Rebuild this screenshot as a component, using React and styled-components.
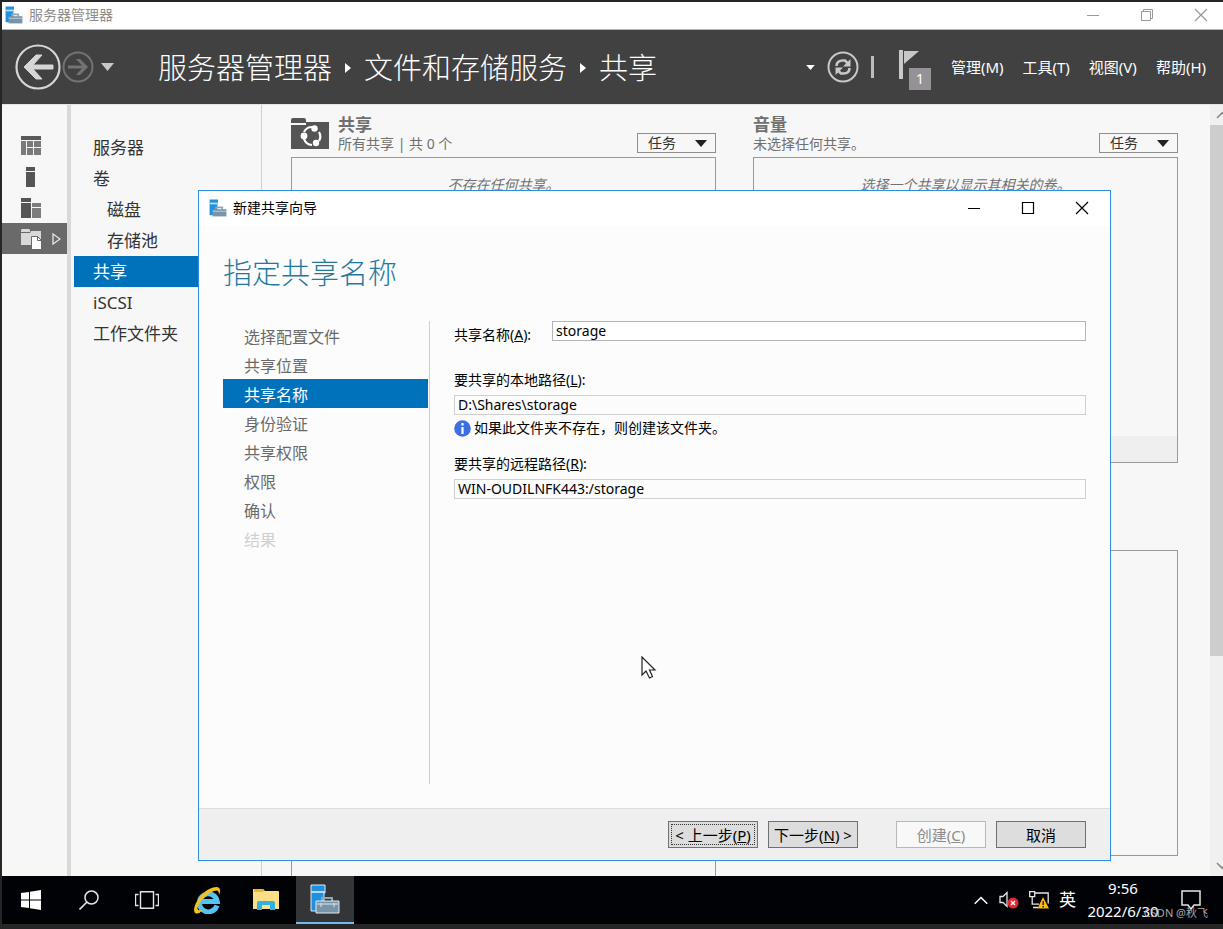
import React, { useState } from "react";
import styled, { createGlobalStyle, css } from "styled-components";

const GlobalStyle = createGlobalStyle`
  * {
    box-sizing: border-box;
  }

  body {
    margin: 0;
    background: #262626;
    font-family: "Noto Sans", "Noto Sans CJK SC", sans-serif;
    font-size: 14px;
    line-height: 20px;
    color: #000;
  }

  button, input {
    font: inherit;
    color: inherit;
  }

  button {
    padding: 0;
    border: 0;
    background: none;
  }

  a {
    color: inherit;
    text-decoration: none;
  }

  ul, ol {
    margin: 0;
    padding: 0;
    list-style: none;
  }

  svg {
    display: block;
    flex: none;
  }
`;

/* ===== DESKTOP ===== */
const Desktop = styled.div`
  position: relative;
  display: flex;
  flex-direction: column;
  min-height: 100vh;
  padding: 2px 0 5px 2px;
  overflow: hidden;
`;

/* ===== MAIN WINDOW ===== */
const TitleBar = styled.header`
  display: flex;
  align-items: center;
  gap: 6px;
  height: 28px;
  padding: 0 15px 2px 3px;
  background: #fff;
  border-bottom: 1px solid #b4b4b4;
  color: #8c8c8c;
`;

const WindowButtons = styled.div`
  display: flex;
  gap: 40px;
  margin-left: auto;
`;

const TopBar = styled.div`
  display: flex;
  align-items: center;
  height: 74px;
  padding: 0 17px 0 13px;
  background: #414141;
  color: #fff;
`;

const HistoryButtons = styled.div`
  display: flex;
  align-items: center;
  gap: 1px;
  width: 143px;
`;

const Breadcrumb = styled.nav`
  display: flex;
  align-items: center;
  gap: 13px;
  padding-top: 2px;
  font-size: 29px;
  font-weight: 300;
  line-height: 40px;
  white-space: nowrap;
`;

const TopActions = styled.div`
  display: flex;
  align-items: center;
  gap: 12px;
  margin-left: auto;
  margin-right: 18px;
`;

const Separator = styled.span`
  width: 3px;
  height: 22px;
  background: #bdbdbd;
`;

const FlagButton = styled.button`
  position: relative;
  display: flex;
  align-items: flex-start;
  width: 35px;
  height: 46px;
  margin-left: 12px;
  padding-top: 6px;
`;

const FlagCount = styled.span`
  position: absolute;
  right: 2px;
  bottom: 0;
  width: 22px;
  height: 22px;
  background: #959297;
  color: #fff;
  line-height: 22px;
`;

const Menu = styled.div`
  display: flex;
  gap: 19px;
  font-size: 15px;
  white-space: nowrap;
`;

const Body = styled.div`
  flex: 1;
  display: flex;
  background: #f7f7f7;
  border-top: 1px solid #e4e4e4;
`;

/* ===== LEFT RAIL AND NAVIGATION ===== */
const Rail = styled.div`
  width: 69px;
  padding-top: 25px;
  border-right: 4px solid #d9d9d9;
`;

const RailButton = styled.button`
  display: flex;
  align-items: center;
  gap: 11px;
  width: 100%;
  height: 31px;
  padding-left: 19px;
  ${props => props.$active && css`
    background: #6a6a6a;
  `}
`;

const SideNav = styled.nav`
  width: 191px;
  padding: 27px 0 0 3px;
  border-right: 1px solid #cfcfcf;
`;

const SideLink = styled.a`
  display: block;
  height: 31px;
  padding-left: ${props => (props.$nested ? 33 : 19)}px;
  font-size: 17px;
  line-height: 31px;
  color: #333;
  ${props => props.$active && css`
    background: #0072bc;
    color: #fff;
  `}
`;

/* ===== TILES ===== */
const Tiles = styled.main`
  flex: 1;
  display: grid;
  grid-template-columns: 1fr 1fr;
  gap: 37px;
  padding: 0 32px 0 29px;
`;

const Column = styled.div`
  display: flex;
  flex-direction: column;
`;

const TileHeader = styled.div`
  display: flex;
  align-items: flex-end;
  gap: 9px;
  height: 52px;
  padding-bottom: 4px;
  color: #707070;
  line-height: 18px;
`;

const TileIcon = styled.span`
  padding-bottom: 4px;
`;

const TileTitle = styled.h2`
  margin: 0;
  font-size: 17px;
  font-weight: 700;
  line-height: 20px;
`;

const TasksButton = styled.button`
  display: flex;
  align-items: center;
  justify-content: space-between;
  width: 79px;
  height: 20px;
  margin-left: auto;
  padding: 0 8px 0 10px;
  border: 1px solid #8f8f8f;
  color: #333;
`;

const Panel = styled.section`
  display: flex;
  flex-direction: column;
  justify-content: space-between;
  min-height: 306px;
  border: 1px solid #999;
  text-align: center;
  ${props => props.$fill && css`
    flex: 1;
    border-bottom: 0;
  `}
  & + & {
    margin-top: 87px;
  }
`;

const EmptyText = styled.p`
  margin: 0;
  padding-top: 17px;
  font-style: italic;
  color: #707070;
`;

const PanelFoot = styled.div`
  height: 26px;
  background: #efefef;
`;

const ScrollBar = styled.div`
  display: flex;
  flex-direction: column;
  width: 13px;
  background: #f0f0f0;
  overflow: hidden;
`;

const ScrollArrow = styled.button`
  width: 17px;
  height: 20px;
  padding-left: 6px;
`;

const ScrollThumb = styled.div`
  height: 531px;
  margin-bottom: auto;
  background: #cdcdcd;
`;

/* ===== WIZARD ===== */
const Dialog = styled.section`
  position: absolute;
  top: 190px;
  right: 112px;
  bottom: 68px;
  left: 198px;
  display: flex;
  flex-direction: column;
  background: #fcfcfc;
  border: 1px solid #2d8fdd;
`;

const DialogTitle = styled.header`
  display: flex;
  align-items: center;
  gap: 6px;
  height: 35px;
  padding: 0 21px 2px 10px;
  background: #fff;
`;

const Heading = styled.h1`
  margin: 27px 24px 28px;
  font-size: 29px;
  font-weight: 300;
  line-height: 40px;
  color: #1f7a9c;
`;

const WizardBody = styled.div`
  flex: 1;
  display: flex;
  padding: 0 24px;
`;

const Steps = styled.ol`
  width: 207px;
  padding-right: 1px;
  border-right: 1px solid #cfcfcf;
`;

const Step = styled.li`
  padding: 3px 0 0 21px;
  font-size: 16px;
  line-height: 26px;
  color: ${props => (props.$disabled ? "#d0d0d0" : "#6a6a6a")};
  ${props => props.$active && css`
    background: #0072bc;
    color: #fff;
  `}
`;

const Form = styled.form`
  flex: 1;
  padding-left: 24px;
`;

const NameRow = styled.div`
  display: flex;
  gap: 21px;

  label {
    padding-top: 4px;
  }
`;

const TextBox = styled.input`
  display: block;
  flex: 1;
  width: 100%;
  height: 20px;
  padding: 0 3px;
  border: 1px solid ${props => (props.readOnly ? "#d0d0d0" : "#b4b5bb")};
  background: ${props => (props.readOnly ? "transparent" : "#fff")};
  outline: none;
`;

const Field = styled.div`
  margin-top: ${props => props.$space}px;

  label {
    display: block;
    margin-bottom: 5px;
  }
`;

const Hint = styled.p`
  display: flex;
  align-items: center;
  gap: 3px;
  margin: 3px 0 0;
`;

const WizardFooter = styled.footer`
  display: flex;
  align-items: center;
  justify-content: flex-end;
  gap: 10px;
  height: 52px;
  margin-top: 24px;
  padding: 0 24px;
  background: #efefef;
  border-top: 1px solid #dcdcdc;
`;

const WizardButton = styled.button`
  width: 90px;
  height: 27px;
  border: 1px solid #707070;
  background: #ddd;
  font-size: 15px;
  white-space: nowrap;

  &:disabled {
    margin-left: 28px;
    border-color: #b5b9bc;
    background: #f8f8f8;
    color: #8c8c8c;
  }
  ${props => props.$focused && css`
    outline: 1px dotted #333;
    outline-offset: -4px;
  `}
`;

/* ===== TASKBAR ===== */
const TaskBar = styled.footer`
  display: flex;
  height: 48px;
  background: #000206;
  color: #fff;
`;

const TaskButton = styled.button`
  display: flex;
  align-items: center;
  justify-content: center;
  width: 58px;
  height: 48px;
  ${props => props.$active && css`
    background: #343537;
    border-bottom: 2px solid #76b9ed;
  `}
`;

const PinnedApps = styled.div`
  display: flex;
  gap: 1px;
  margin-left: 2px;
`;

const Tray = styled.div`
  display: flex;
  align-items: center;
  gap: 10px;
  margin-left: auto;
  padding-right: 22px;
`;

const InputLanguage = styled.span`
  font-size: 17px;
`;

const Clock = styled.time`
  width: 74px;
  font-size: 15px;
  line-height: 23px;
  text-align: center;
`;

const ActionCenter = styled.button`
  margin-left: 11px;
`;

const Watermark = styled.span`
  position: absolute;
  right: 15px;
  bottom: 6px;
  font-size: 11px;
  color: #a8a8a8;
`;

const Cursor = styled.svg`
  position: absolute;
  top: 656px;
  left: 641px;
`;

/* ===== ICONS ===== */
const ServerIcon = ({ size, large }) => (
  <svg width={size} height={size} viewBox="0 0 30 30">
    <path d="M1 1h14v8h-1v18H1z" fill="#1f90df" stroke={large ? "#dcebf5" : "none"} />
    <path d={large ? "M1 7h14v2H1z" : "M1 6h14v3H1z"} fill="#b5dcf6" />
    <path d="M12 17v-3h10v3" fill="none" stroke="#8fa6b5" strokeWidth={large ? 2 : 3} />
    <path d="M6 17h23v12H6z" fill="#7894a8" stroke={large ? "#dcebf5" : "none"} />
    {large ? (
      <path d="M7 20h21M11 19v4M24 19v4" stroke="#dbe5eb" />
    ) : (
      <path d="M6 20.500h23" stroke="#c3d0d8" strokeWidth="1.500" />
    )}
  </svg>
);

const Minimize = ({ color }) => (
  <svg width="14" height="14" viewBox="0 0 14 14">
    <path d="M1 7.500h12" stroke={color} />
  </svg>
);

const Close = ({ color }) => (
  <svg width="14" height="14" viewBox="0 0 14 14">
    <path d="M1 1l12 12M13 1L1 13" stroke={color} strokeWidth="1.200" />
  </svg>
);

const Caret = ({ width = 12, height = 7, color = "#222" }) => (
  <svg width={width} height={height} viewBox="0 0 12 7">
    <path d="M0 0h12L6 7z" fill={color} />
  </svg>
);

const CrumbArrow = () => (
  <svg width="6" height="10" viewBox="0 0 6 10">
    <path d="M0 0l6 5-6 5z" fill="#fff" />
  </svg>
);

const ShareFolder = () => (
  <svg width="38" height="31" viewBox="0 0 38 31">
    <path d="M0 5V2q0-2 2-2h11q2 0 2 2v3z" fill="#555" />
    <path d="M0 7h15V4h23v27H0z" fill="#555" />
    <path d="M13 14a9 9 0 0 1 8-5M28 14a9 9 0 0 1 0 9M21 27a9 9 0 0 1-8-6" fill="none" stroke="#fff" strokeWidth="2.200" />
    <circle cx="23.500" cy="10.500" r="3.200" fill="#fff" />
    <circle cx="13" cy="18" r="3.400" fill="#fff" />
    <circle cx="25" cy="25" r="3.200" fill="#fff" />
  </svg>
);

const DashboardIcon = () => (
  <svg width="20" height="19" viewBox="0 0 20 19">
    <path d="M0 0h20v4H0z" fill="#5a5a5a" />
    <path d="M0 5h5v14H0zM6 5h6v6H6zM13 5h7v6h-7zM6 12h6v7H6zM13 12h7v7h-7z" fill="#7a7a7a" />
  </svg>
);

const LocalServerIcon = () => (
  <svg width="20" height="20" viewBox="0 0 20 20">
    <path d="M5 0h9v4H5zM5 5h9v15H5z" fill="#555" />
  </svg>
);

const AllServersIcon = () => (
  <svg width="20" height="20" viewBox="0 0 20 20">
    <path d="M0 0h10v4H0zM0 5h10v15H0z" fill="#555" />
    <path d="M11 5h9v4h-9zM11 10h9v10h-9z" fill="#7d7d7d" />
  </svg>
);

const FilesIcon = () => (
  <svg width="20" height="20" viewBox="0 0 20 20">
    <path d="M0 3V1l1-1h7l1 1v2zM0 4h9l1-2h10v14H0z" fill="#d8d8d8" />
    <path d="M10.500 7.500h6l4 4v9h-10z" fill="#fff" stroke="#6a6a6a" />
    <path d="M16.500 7.500v4h4" fill="none" stroke="#6a6a6a" />
  </svg>
);

const RefreshIcon = () => (
  <svg width="32" height="32" viewBox="0 0 32 32">
    <circle cx="16" cy="16" r="14.500" fill="none" stroke="#c8c8c8" strokeWidth="2" />
    <path d="M9.500 15c0-4 3-5.500 6-5.500h2.500l3 3M22.500 17c0 4-3 5.500-6 5.500H14l-3-3" fill="none" stroke="#c8c8c8" strokeWidth="2.600" />
    <path d="M23.500 8v7.500H16zM8.500 24v-7.500H16z" fill="#c8c8c8" />
  </svg>
);

const Chevron = ({ width = 12, down, color = "#888", stroke = 1.6 }) => (
  <svg width={width} height={width / 2 + 2} viewBox="0 0 12 8">
    <path d={down ? "M1 1l5 5 5-5" : "M1 7l5-5 5 5"} fill="none" stroke={color} strokeWidth={stroke} />
  </svg>
);

const steps = [
  "选择配置文件",
  "共享位置",
  "共享名称",
  "身份验证",
  "共享权限",
  "权限",
  "确认",
  "结果",
];

const links = [
  { text: "服务器" },
  { text: "卷" },
  { text: "磁盘", nested: true },
  { text: "存储池", nested: true },
  { text: "共享", active: true },
  { text: "iSCSI" },
  { text: "工作文件夹" },
];

const Tasks = () => (
  <TasksButton>
    任务 <Caret />
  </TasksButton>
);

/* ===== MAIN COMPONENT ===== */
export default function App() {
  const [name, setName] = useState("storage");

  return (
    <Desktop>
      <GlobalStyle />

      <TitleBar>
        <ServerIcon size={18} />
        服务器管理器
        <WindowButtons>
          <button aria-label="最小化"><Minimize color="#999" /></button>
          <button aria-label="还原">
            <svg width="14" height="14" viewBox="0 0 14 14">
              <path d="M1.500 3.500h9v9h-9zM3.500 3V1.500h9v9H11" fill="none" stroke="#999" />
            </svg>
          </button>
          <button aria-label="关闭"><Close color="#999" /></button>
        </WindowButtons>
      </TitleBar>

      <TopBar>
        <HistoryButtons>
          <button aria-label="后退">
            <svg width="46" height="46" viewBox="0 0 46 46">
              <circle cx="23" cy="23" r="21.500" fill="none" stroke="#d6d6d6" strokeWidth="2.200" />
              <path d="M38 21H18l9-10h-6L9 23l12 12h6l-9-10h20z" fill="#d6d6d6" stroke="#d6d6d6" />
            </svg>
          </button>
          <button aria-label="前进">
            <svg width="32" height="32" viewBox="0 0 32 32">
              <circle cx="16" cy="16" r="14.500" fill="none" stroke="#737373" strokeWidth="2" />
              <path d="M6 14.500h14L14 8h4l8 8-8 8h-4l6-6.500H6z" fill="#737373" />
            </svg>
          </button>
          <svg width="20" height="8" viewBox="0 0 20 8">
            <path d="M6 0h13l-6.500 8z" fill="#c8c8c8" />
          </svg>
        </HistoryButtons>
        <Breadcrumb>
          <a href="#manager">服务器管理器</a>
          <CrumbArrow />
          <a href="#storage">文件和存储服务</a>
          <CrumbArrow />
          <a href="#shares">共享</a>
        </Breadcrumb>
        <TopActions>
          <Caret width={9} height={5} color="#fff" />
          <button aria-label="刷新"><RefreshIcon /></button>
          <Separator />
          <FlagButton aria-label="通知">
            <svg width="22" height="30" viewBox="0 0 22 30">
              <path d="M1 0h4v29H1z" fill="#c8c8c8" />
              <path d="M6 1h15L6 14z" fill="#c8c8c8" />
            </svg>
            <FlagCount>1</FlagCount>
          </FlagButton>
        </TopActions>
        <Menu>
          <button>管理(M)</button>
          <button>工具(T)</button>
          <button>视图(V)</button>
          <button>帮助(H)</button>
        </Menu>
      </TopBar>

      <Body>
        <Rail>
          <RailButton aria-label="仪表板"><DashboardIcon /></RailButton>
          <RailButton aria-label="本地服务器"><LocalServerIcon /></RailButton>
          <RailButton aria-label="所有服务器"><AllServersIcon /></RailButton>
          <RailButton aria-label="文件和存储服务" $active>
            <FilesIcon />
            <svg width="9" height="12" viewBox="0 0 9 12">
              <path d="M1 1l7 5-7 5z" fill="none" stroke="#e6e6e6" strokeWidth="1.300" />
            </svg>
          </RailButton>
        </Rail>

        <SideNav>
          {links.map(link => (
            <SideLink key={link.text} href="#nav" $nested={link.nested} $active={link.active}>
              {link.text}
            </SideLink>
          ))}
        </SideNav>

        <Tiles>
          <Column>
            <TileHeader>
              <TileIcon><ShareFolder /></TileIcon>
              <div>
                <TileTitle>共享</TileTitle>
                所有共享 | 共 0 个
              </div>
              <Tasks />
            </TileHeader>
            <Panel $fill>
              <EmptyText>不存在任何共享。</EmptyText>
            </Panel>
          </Column>
          <Column>
            <TileHeader>
              <div>
                <TileTitle>音量</TileTitle>
                未选择任何共享。
              </div>
              <Tasks />
            </TileHeader>
            <Panel>
              <EmptyText>选择一个共享以显示其相关的卷。</EmptyText>
              <PanelFoot />
            </Panel>
            <Panel />
          </Column>
        </Tiles>

        <ScrollBar>
          <ScrollArrow aria-label="向上滚动"><Chevron /></ScrollArrow>
          <ScrollThumb />
          <ScrollArrow aria-label="向下滚动"><Chevron down /></ScrollArrow>
        </ScrollBar>
      </Body>

      {/* Taskbar */}
      <TaskBar>
        <TaskButton aria-label="开始">
          <svg width="20" height="20" viewBox="0 0 20 20">
            <path d="M0 3l8-1v7.500H0zM9 1.800L20 0v9.500H9zM0 10.500h8V18l-8-1zM9 10.500h11V20L9 18.200z" fill="#fff" />
          </svg>
        </TaskButton>
        <TaskButton aria-label="搜索">
          <svg width="20" height="20" viewBox="0 0 20 20">
            <circle cx="12.500" cy="7.500" r="6.500" fill="none" stroke="#e6e6e6" strokeWidth="1.500" />
            <path d="M8 12l-7.500 7.500" stroke="#e6e6e6" strokeWidth="1.600" />
          </svg>
        </TaskButton>
        <TaskButton aria-label="任务视图">
          <svg width="24" height="18" viewBox="0 0 24 18">
            <path d="M5.500.700h13v16.600h-13zM3.500 3.500h-3v11h3M20.500 3.500h3v11h-3" fill="none" stroke="#e6e6e6" strokeWidth="1.400" />
          </svg>
        </TaskButton>
        <PinnedApps>
          <TaskButton aria-label="Internet Explorer">
            <svg width="28" height="28" viewBox="0 0 28 28">
              <path d="M24 19.500A9 9 0 1 1 24.300 15.500H9" fill="none" stroke="#56c4f2" strokeWidth="5" />
              <path d="M2 27C-2 22 8 5 20 1.500c7-2 8.500 2 6 7.500 0-4-1-5.500-5-4C12 8 4 19 4.500 23q1 2 5 1-4 5-7.500 3z" fill="#f5c21c" />
            </svg>
          </TaskButton>
          <TaskButton aria-label="文件资源管理器">
            <svg width="26" height="22" viewBox="0 0 26 22">
              <path d="M0 0h10l2 2h13q1 0 1 1v17H0z" fill="#fddf86" />
              <path d="M1 0h9l1 2-1 1H1z" fill="#eeb52f" />
              <path d="M4 21v-7q0-2 2-2h14q2 0 2 2v7h-5v-5H9v5z" fill="#31b1e6" />
            </svg>
          </TaskButton>
          <TaskButton aria-label="服务器管理器" $active>
            <ServerIcon size={30} large />
          </TaskButton>
        </PinnedApps>
        <Tray>
          <button aria-label="显示隐藏的图标"><Chevron width={16} color="#fff" stroke={1.2} /></button>
          <svg width="20" height="18" viewBox="0 0 20 18">
            <path d="M1 5.500h3l4-4v14l-4-4H1z" fill="none" stroke="#e6e6e6" strokeWidth="1.300" />
            <circle cx="14" cy="12" r="5.500" fill="#df2a35" />
            <path d="M12 10l4 4M16 10l-4 4" stroke="#fff" strokeWidth="1.400" />
          </svg>
          <svg width="20" height="18" viewBox="0 0 20 18">
            <path d="M.700.700h5v5h-5zM5.700 2h13.500v10.500M3.200 5.700v7.500H10M4 16.500h5" fill="none" stroke="#e6e6e6" strokeWidth="1.300" />
            <path d="M14 6l6 11.500H8.500z" fill="#fcb813" />
            <path d="M14.200 10v4M14.200 15v1.500" stroke="#222" strokeWidth="1.400" />
          </svg>
          <InputLanguage>英</InputLanguage>
          <Clock>
            9:56
            <br />
            2022/6/30
          </Clock>
          <ActionCenter aria-label="操作中心">
            <svg width="20" height="20" viewBox="0 0 20 20">
              <path d="M1 1h18v14h-6l-3 4-3-4H1z" fill="none" stroke="#e6e6e6" strokeWidth="1.500" />
            </svg>
          </ActionCenter>
        </Tray>
      </TaskBar>

      {/* New share wizard */}
      <Dialog role="dialog" aria-label="新建共享向导">
        <DialogTitle>
          <ServerIcon size={18} />
          新建共享向导
          <WindowButtons>
            <button aria-label="最小化"><Minimize color="#000" /></button>
            <button aria-label="最大化">
              <svg width="14" height="14" viewBox="0 0 14 14">
                <path d="M1.500 1.500h11v11h-11z" fill="none" stroke="#000" strokeWidth="1.200" />
              </svg>
            </button>
            <button aria-label="关闭"><Close color="#000" /></button>
          </WindowButtons>
        </DialogTitle>
        <Heading>指定共享名称</Heading>
        <WizardBody>
          <Steps>
            {steps.map((step, i) => (
              <Step key={step} $active={i === 2} $disabled={i === 7}>{step}</Step>
            ))}
          </Steps>
          <Form>
            <NameRow>
              <label htmlFor="name">共享名称(<u>A</u>):</label>
              <TextBox id="name" value={name} onChange={e => setName(e.target.value)} />
            </NameRow>
            <Field $space={25}>
              <label htmlFor="local">要共享的本地路径(<u>L</u>):</label>
              <TextBox id="local" value={`D:\\Shares\\${name}`} readOnly />
            </Field>
            <Hint>
              <svg width="17" height="17" viewBox="0 0 17 17">
                <circle cx="8.500" cy="8.500" r="8.300" fill="#3d6fe0" />
                <path d="M8.500 3v2.400M8.500 7v7" stroke="#fff" strokeWidth="2.200" />
              </svg>
              如果此文件夹不存在，则创建该文件夹。
            </Hint>
            <Field $space={16}>
              <label htmlFor="remote">要共享的远程路径(<u>R</u>):</label>
              <TextBox id="remote" value={`WIN-OUDILNFK443:/${name}`} readOnly />
            </Field>
          </Form>
        </WizardBody>
        <WizardFooter>
          <WizardButton $focused>&lt; 上一步(<u>P</u>)</WizardButton>
          <WizardButton>下一步(<u>N</u>) &gt;</WizardButton>
          <WizardButton disabled>创建(<u>C</u>)</WizardButton>
          <WizardButton>取消</WizardButton>
        </WizardFooter>
      </Dialog>

      <Cursor width="16" height="24" viewBox="0 0 16 24">
        <path d="M1 1v18l4-4 3.500 7 3-1.500L8.500 14H14z" fill="#fff" stroke="#222" strokeWidth="1.200" />
      </Cursor>
      <Watermark>CSDN @秋飞</Watermark>
    </Desktop>
  );
}
